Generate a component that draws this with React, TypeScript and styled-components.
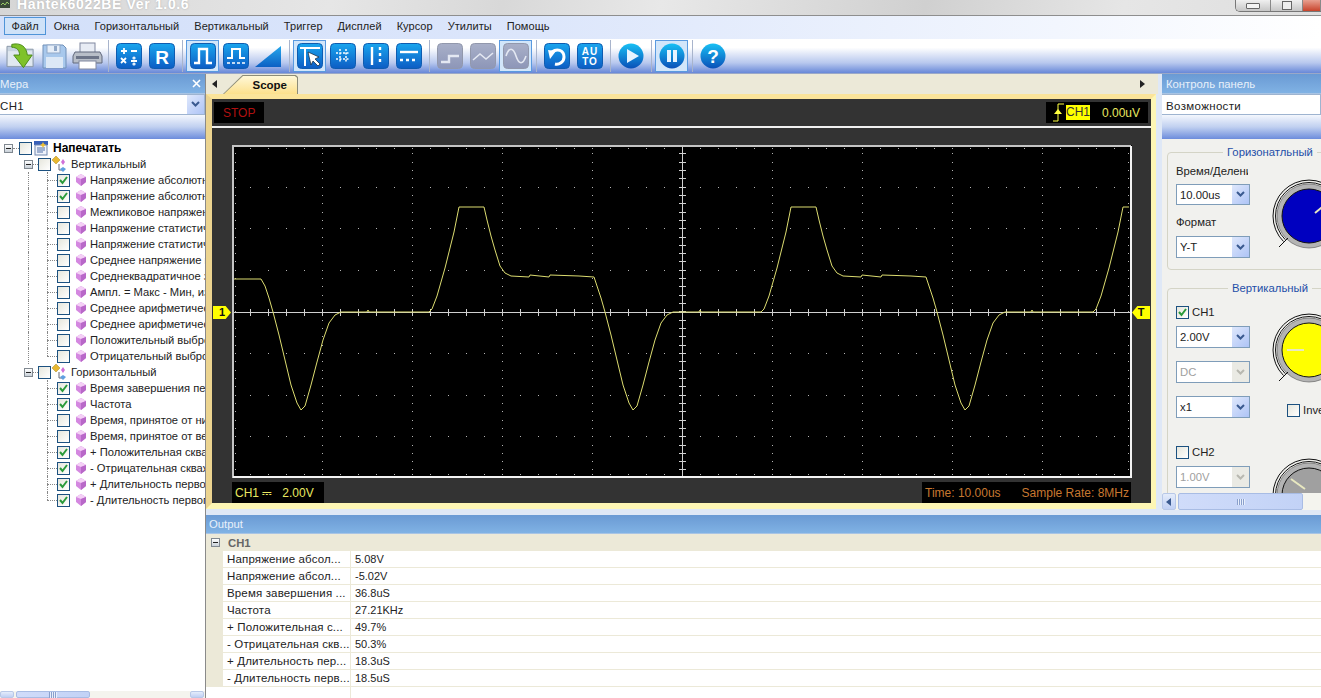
import React from 'react';
import styled, { createGlobalStyle } from 'styled-components';

const GlobalStyle = createGlobalStyle`
  html, body { margin: 0; padding: 0; overflow: hidden; background: #fff; }
  * { box-sizing: border-box; }
`;

const FONT = `"Liberation Sans", Arial, sans-serif`;

const Root = styled.div`
  width: 1321px;
  height: 698px;
  display: flex;
  flex-direction: column;
  overflow: hidden;
  font-family: ${FONT};
  font-size: 11.3px;
  color: #222;
  background: #dfe8f6;
`;

/* title bar */
const TitleBar = styled.div`
  height: 16px;
  flex: none;
  display: flex;
  justify-content: space-between;
  overflow: hidden;
  border-bottom: 1px solid #8e8e8e;
  background: linear-gradient(100deg, #d6d6d6 0%, #e6e6e6 25%, #d8d8d8 38%, #e8e8e8 50%, #d0d0d0 70%, #e6e6e6 85%, #dedede 100%);
`;
const TitleLeft = styled.div`
  display: flex;
  align-items: flex-start;
  gap: 7px;
`;
const TitleText = styled.div`
  font-size: 14px;
  font-weight: bold;
  letter-spacing: 0.65px;
  line-height: 14px;
  margin-top: -3px;
  color: #fff;
  text-shadow: 0 0 2px #aaa;
`;
const WinButtons = styled.div`
  display: flex;
  height: 12px;
  border: 1px solid #777;
  border-top: none;
  border-right: none;
  border-radius: 0 0 0 5px;
  overflow: hidden;
`;
const WinButton = styled.div<{ $w: number; $close?: boolean }>`
  width: ${(p) => p.$w}px;
  display: flex;
  align-items: center;
  justify-content: center;
  border-right: 1px solid #888;
  background: ${(p) => (p.$close ? 'linear-gradient(#e8a090, #c8442c)' : 'linear-gradient(#f0f0f0, #c6c6c6)')};
`;
const MinGlyph = styled.div`
  width: 14px;
  height: 6px;
  border: 1px solid #666;
  border-radius: 1px;
  background: #f4f4f4;
`;
const RestoreGlyph = styled.div`
  width: 10px;
  height: 9px;
  border: 1px solid #666;
  background: #eee;
`;

/* menu */
const MenuBar = styled.div`
  height: 23px;
  flex: none;
  display: flex;
  align-items: flex-start;
  padding: 1px 0 0 4px;
  background: linear-gradient(90deg, #d3e0fa 0%, #dce6fb 40%, #f2f6fe 80%, #ffffff 100%);
`;
const MenuItem = styled.div<{ $active?: boolean }>`
  height: 18px;
  line-height: 17px;
  padding: 0 6.5px;
  font-size: 11px;
  letter-spacing: 0.05px;
  white-space: nowrap;
  border: 1px solid ${(p) => (p.$active ? '#4f94d8' : 'transparent')};
  background: ${(p) => (p.$active ? '#cfe2f8' : 'transparent')};
  color: #222;
`;

/* toolbar */
const Toolbar = styled.div`
  height: 35px;
  flex: none;
  display: flex;
  align-items: center;
  padding-left: 5px;
  background: linear-gradient(#fff 0%, #fff 25%, #b8c8ee 70%, #6888d8 100%);
  border-bottom: 1px solid #9aa8c8;
`;
const ToolButton = styled.div<{ $active?: boolean }>`
  width: 33px;
  height: 32px;
  flex: none;
  display: flex;
  align-items: center;
  justify-content: center;
  border: 1px solid ${(p) => (p.$active ? '#5a9ae0' : 'transparent')};
  background: ${(p) => (p.$active ? '#d2e6fa' : 'transparent')};
`;
const ToolSep = styled.div`
  width: 1px;
  height: 32px;
  flex: none;
  margin: 0 3px 0 4px;
  background: #a8b4cc;
`;

const Tile = ({ gray, children }: { gray?: boolean; children?: React.ReactNode }) => {
  const id = gray ? 'tileGray' : 'tileBlue';
  return (
    <svg width="26" height="26" viewBox="0 0 26 26">
      <defs>
        <linearGradient id={id} x1="0" y1="0" x2="0" y2="1">
          <stop offset="0" stopColor={gray ? '#a9b0c8' : '#1aa6ee'} />
          <stop offset="1" stopColor={gray ? '#8d96b8' : '#0c5cc4'} />
        </linearGradient>
      </defs>
      <rect x="0.5" y="0.5" width="25" height="25" rx="4" fill={`url(#${id})`} stroke={gray ? '#9298ac' : '#0f5cb0'} />
      <g fill="none" stroke="#fff" strokeWidth="2">{children}</g>
    </svg>
  );
};

const Disc = ({ children }: { children?: React.ReactNode }) => (
  <svg width="26" height="26" viewBox="0 0 26 26">
    <defs>
      <linearGradient id="discBlue" x1="0" y1="0" x2="0" y2="1">
        <stop offset="0" stopColor="#18c0f4" />
        <stop offset="1" stopColor="#0a50b8" />
      </linearGradient>
    </defs>
    <circle cx="13" cy="13" r="12.5" fill="url(#discBlue)" />
    {children}
  </svg>
);

const OpenIcon = () => (
  <svg width="32" height="28" viewBox="0 0 32 28">
    <path d="M1 4h10l2 3h15v18H1z" fill="#c8d4e0" stroke="#8a98a8" />
    <path d="M2 9h25v15H2z" fill="#e0e8f0" />
    <path d="M6 2c9-2 15 2 16 11h5l-9 13-10-13h6C14 8 11 5 6 5z" fill="#7fc22a" stroke="#4a8a18" />
  </svg>
);
const SaveIcon = () => (
  <svg width="25" height="26" viewBox="0 0 25 26">
    <path d="M1 2h20l3 3v20H1z" fill="#a8c8ec" stroke="#7090b8" />
    <rect x="5" y="2" width="13" height="8" fill="#e6eef8" stroke="#90a8c8" />
    <rect x="12" y="3" width="3" height="5" fill="#90a8c8" />
    <rect x="4" y="14" width="17" height="11" fill="#dce8f6" />
  </svg>
);
const PrintIcon = () => (
  <svg width="31" height="28" viewBox="0 0 31 28">
    <rect x="8" y="1" width="15" height="10" fill="#e8ecf4" stroke="#8088a0" />
    <path d="M3 10h25l2 4v7H1v-7z" fill="#b8bec8" stroke="#60687c" />
    <rect x="4" y="14" width="23" height="3" fill="#6c7488" />
    <rect x="7" y="19" width="17" height="8" fill="#fff" stroke="#8088a0" />
  </svg>
);
const RampIcon = () => (
  <svg width="27" height="22" viewBox="0 0 27 22">
    <defs>
      <linearGradient id="ramp" x1="0" y1="0" x2="0" y2="1">
        <stop offset="0" stopColor="#26a8ec" />
        <stop offset="1" stopColor="#0c60c4" />
      </linearGradient>
    </defs>
    <polygon points="0,22 26,1 26,22" fill="url(#ramp)" />
  </svg>
);

/* main layout */
const Main = styled.div`
  flex: 1;
  min-height: 0;
  display: flex;
`;
const LeftPanel = styled.div`
  width: 206px;
  flex: none;
  display: flex;
  flex-direction: column;
  border-right: 1px solid #8a8a8a;
  background: #fff;
`;
const DockHeader = styled.div<{ $h?: number; $pl?: number }>`
  height: ${(p) => p.$h ?? 20}px;
  flex: none;
  display: flex;
  align-items: center;
  justify-content: space-between;
  padding: 0 4px 0 ${(p) => p.$pl ?? 0}px;
  color: #e8f0fa;
  font-size: 11.3px;
  background: linear-gradient(#6a9ad4, #80b2e4);
  border-bottom: 1px solid #a8c4e4;
`;
const DockCombo = styled.div<{ $pl?: number }>`
  height: 21px;
  flex: none;
  display: flex;
  align-items: center;
  justify-content: space-between;
  padding-left: ${(p) => p.$pl ?? 0}px;
  background: #fff;
  border: 1px solid #9eb4d0;
  border-left: none;
  font-size: 11.5px;
  letter-spacing: 0.35px;
`;
const ComboText = styled.span`
  padding-top: 2px;
`;
const DockBand = styled.div`
  height: 24px;
  flex: none;
  background: linear-gradient(#f4f7fd 0%, #c0d0f0 50%, #6c8cdc 100%);
`;
const Tree = styled.div`
  flex: 1;
  min-height: 0;
  padding-top: 1px;
  overflow: hidden;
  background: #fff;
`;
const TreeRow = styled.div<{ $level: number }>`
  height: 16px;
  display: flex;
  align-items: center;
  white-space: nowrap;
  padding-left: ${(p) => [4, 24, 28][p.$level]}px;
  font-size: 11.2px;
  color: #222;
`;
const Expander = styled.span`
  width: 9px;
  height: 9px;
  flex: none;
  display: flex;
  align-items: center;
  justify-content: center;
  border: 1px solid #808890;
  background: linear-gradient(#fff, #c8d0d8);
  &::before {
    content: '';
    width: 5px;
    height: 1px;
    background: #222;
  }
`;
const Stub = styled.span<{ $w: number }>`
  width: ${(p) => p.$w}px;
  flex: none;
  border-top: 1px dotted #888;
`;
const Pipe = styled.span<{ $show: boolean }>`
  width: 19px;
  height: 16px;
  flex: none;
  border-left: 1px dotted ${(p) => (p.$show ? '#888' : 'transparent')};
`;
const Elbow = styled.span<{ $last?: boolean }>`
  width: 10px;
  height: 16px;
  flex: none;
  position: relative;
  &::before {
    content: '';
    position: absolute;
    left: 0;
    top: 0;
    height: ${(p) => (p.$last ? '8px' : '16px')};
    border-left: 1px dotted #888;
  }
  &::after {
    content: '';
    position: absolute;
    left: 0;
    top: 8px;
    width: 10px;
    border-top: 1px dotted #888;
  }
`;
const CheckBox = styled.span`
  width: 13px;
  height: 13px;
  flex: none;
  display: inline-flex;
  align-items: center;
  justify-content: center;
  border: 1px solid #1c5180;
  background: linear-gradient(135deg, #e6e6dc, #ffffff);
`;
const Check = ({ on }: { on?: boolean }) => (
  <CheckBox>
    {on && (
      <svg width="11" height="11" viewBox="0 0 11 11">
        <path d="M2 5l2.5 3L9 2" fill="none" stroke="#2a9a3a" strokeWidth="2" />
      </svg>
    )}
  </CheckBox>
);
const TreeLabel = styled.span<{ $bold?: boolean; $gap: number }>`
  margin-left: ${(p) => p.$gap}px;
  font-weight: ${(p) => (p.$bold ? 'bold' : 'normal')};
  font-size: ${(p) => (p.$bold ? '12px' : 'inherit')};
  color: ${(p) => (p.$bold ? '#000' : '#222')};
`;
const GemWrap = styled.svg`
  margin-left: 6px;
  flex: none;
`;
const Gem = () => (
  <GemWrap width="10" height="12" viewBox="0 0 10 12">
    <polygon points="5,0 10,3 10,8 5,12 0,8 0,3" fill="#d488e0" />
    <polygon points="5,0 10,3 5,5 0,3" fill="#f4d0f6" />
    <polygon points="5,5 10,3 10,8 5,12" fill="#b868c8" />
  </GemWrap>
);
const RootIcon = () => (
  <svg width="15" height="15" viewBox="0 0 15 15" style={{ marginLeft: 2, flex: 'none' }}>
    <rect x="0" y="0" width="14" height="4" fill="#3860b8" />
    <rect x="1" y="4" width="12" height="10" fill="#eef2fa" stroke="#7088b0" />
    <path d="M3 7h8M3 9h8M3 11h6" stroke="#5070a8" />
    <path d="M9 1l1 2 2 1-2 1-1 2-1-2-2-1 2-1z" fill="#f0c030" />
  </svg>
);
const GroupIcon = () => (
  <svg width="15" height="16" viewBox="0 0 15 16" style={{ marginLeft: 1, flex: 'none' }}>
    <polygon points="4,0 8,4 4,8 0,4" fill="#e8b830" stroke="#a88420" strokeWidth="0.5" />
    <polygon points="11,3 13,6 11,9 9,6" fill="#d070d8" />
    <path d="M7 8v6h3" fill="none" stroke="#667" />
    <polygon points="11,11 14,13 11,16 8,13" fill="#60a0e0" />
  </svg>
);
const HScroll = styled.div<{ $h: number }>`
  height: ${(p) => p.$h}px;
  flex: none;
  display: flex;
  align-items: stretch;
  background: #f4f4ee;
  overflow: hidden;
`;
const ScrollBtn = styled.div<{ $ml?: number }>`
  width: 14px;
  flex: none;
  margin-left: ${(p) => p.$ml ?? 0}px;
  display: flex;
  align-items: center;
  justify-content: center;
  border: 1px solid #b8c8e8;
  border-radius: 2px;
  background: linear-gradient(#e4ecfb, #c0d0f4);
`;
const ScrollThumb = styled.div<{ $w: number }>`
  width: ${(p) => p.$w}px;
  flex: none;
  margin-left: 2px;
  display: flex;
  align-items: center;
  justify-content: center;
  border: 1px solid #a8bce4;
  border-radius: 2px;
  background: linear-gradient(90deg, #d0dcfa, #c2d2f6);
`;
const Grip = styled.div`
  width: 8px;
  height: 6px;
  background: repeating-linear-gradient(90deg, #8aa0cc 0 1px, #e8effc 1px 2px);
`;
const LeftCaret = () => (
  <svg width="6" height="8" viewBox="0 0 6 8">
    <path d="M5 0v8L0 4z" fill="#3a5a90" />
  </svg>
);

const RightArea = styled.div`
  flex: 1;
  min-width: 0;
  display: flex;
  flex-direction: column;
`;
const TopArea = styled.div`
  height: 441px;
  flex: none;
  display: flex;
`;
const Center = styled.div`
  width: 952px;
  flex: none;
  display: flex;
  flex-direction: column;
`;
const TabBar = styled.div`
  height: 20px;
  flex: none;
  display: flex;
  align-items: flex-end;
  background: #ece9d8;
  padding-left: 6px;
`;
const TabArrow = styled.span<{ $right?: boolean }>`
  width: 0;
  height: 0;
  flex: none;
  align-self: center;
  border-top: 4px solid transparent;
  border-bottom: 4px solid transparent;
  border-right: ${(p) => (p.$right ? 'none' : '5px solid #222')};
  border-left: ${(p) => (p.$right ? '5px solid #222' : 'none')};
  margin-left: ${(p) => (p.$right ? 'auto' : '0')};
  margin-right: ${(p) => (p.$right ? '13px' : '0')};
`;
const Tab = styled.div`
  width: 75px;
  height: 19px;
  margin-left: 6px;
  position: relative;
  display: flex;
  align-items: center;
  justify-content: flex-end;
  padding-right: 11px;
  font-weight: bold;
  font-size: 11.5px;
  color: #111;
  &::before {
    content: '';
    position: absolute;
    inset: 0;
    background: #8c8c78;
    clip-path: polygon(0 100%, 26% 0, 97% 0, 100% 10%, 100% 100%);
  }
  &::after {
    content: '';
    position: absolute;
    inset: 1px 1px 0 1px;
    background: linear-gradient(#fff8d8, #fce08c);
    clip-path: polygon(0 100%, 26% 0, 97% 0, 100% 10%, 100% 100%);
  }
`;
const TabLabel = styled.span`
  position: relative;
  z-index: 1;
`;
const ScopeFrame = styled.div`
  width: 950px;
  flex: 1;
  min-height: 0;
  margin-bottom: 6px;
  border-style: solid;
  border-width: 5px 5px 6px 6px;
  border-color: #fbe49a #fdf6b4 #fdf6b4 #ecd490;
`;
const ScopePanel = styled.div`
  position: relative;
  height: 100%;
  display: flex;
  flex-direction: column;
  background: #333;
`;
const ScopeTop = styled.div`
  height: 29px;
  flex: none;
  display: flex;
  align-items: center;
  justify-content: space-between;
  padding: 0 3px 0 2px;
  border-bottom: 2px solid #f0f0f0;
`;
const ReadOut = styled.div<{ $w: number; $color: string }>`
  width: ${(p) => p.$w}px;
  height: 21px;
  flex: none;
  display: flex;
  align-items: center;
  background: #000;
  color: ${(p) => p.$color};
  font-size: 12px;
  white-space: nowrap;
`;
const StopText = styled.span`
  margin-left: 9px;
`;
const HiCh = styled.span`
  background: #ffff00;
  color: #333;
  line-height: 15px;
`;
const TrigValue = styled.span`
  margin-left: 12px;
`;
const PlotWrap = styled.div`
  padding: 17px 0 0 20px;
  flex: none;
`;
const Plot = styled.svg`
  display: block;
`;
const ScopeBottom = styled.div`
  display: flex;
  justify-content: space-between;
  padding: 4px 20px 0 20px;
`;
const BottomText = styled.span`
  margin-left: 3px;
`;
const RateText = styled.span`
  margin-left: 21px;
`;
const Marker = styled.div<{ $side: 'left' | 'right' }>`
  position: absolute;
  top: 207px;
  ${(p) => (p.$side === 'left' ? 'left: 1px;' : 'right: 1px;')}
  width: 18px;
  height: 13px;
  display: flex;
  align-items: center;
  justify-content: center;
  background: #ffff00;
  color: #111;
  font-size: 11px;
  font-weight: bold;
  line-height: 13px;
  clip-path: ${(p) =>
    p.$side === 'left'
      ? 'polygon(0 0, 70% 0, 100% 50%, 70% 100%, 0 100%)'
      : 'polygon(30% 0, 100% 0, 100% 100%, 30% 100%, 0 50%)'};
`;

/* control panel */
const RightPanel = styled.div`
  width: 159px;
  flex: none;
  margin-left: 4px;
  display: flex;
  flex-direction: column;
  height: 436px;
`;
const Controls = styled.div`
  flex: 1;
  min-height: 0;
  overflow: hidden;
  padding: 6px 0 0 5px;
  background: #f1f1ee;
`;
const Group = styled.fieldset<{ $mt?: number; $pb?: number }>`
  width: 240px;
  margin: ${(p) => p.$mt ?? 0}px 0 0 0;
  padding: 5px 0 ${(p) => p.$pb ?? 0}px 8px;
  min-width: 0;
  border: 1px solid #d4d4c6;
  border-radius: 4px;
  display: block;
`;
const GroupTitle = styled.legend<{ $ml: number }>`
  margin-left: ${(p) => p.$ml}px;
  padding: 0 4px;
  line-height: 14px;
  font-size: 11.3px;
  color: #1f4fa8;
`;
const GroupBody = styled.div`
  display: flex;
`;
const ControlCol = styled.div`
  width: 74px;
  flex: none;
`;
const KnobCol = styled.div`
  margin-left: 21px;
  flex: none;
`;
const FieldLabel = styled.div<{ $mt?: number }>`
  width: 72px;
  height: 14px;
  line-height: 14px;
  margin-top: ${(p) => p.$mt ?? 0}px;
  overflow: hidden;
  white-space: nowrap;
  color: #222;
`;
const Select = styled.div<{ $mt: number; $off?: boolean; $h?: number }>`
  width: 74px;
  height: ${(p) => p.$h ?? 22}px;
  margin-top: ${(p) => p.$mt}px;
  display: flex;
  align-items: center;
  justify-content: space-between;
  padding-left: 3px;
  border: 1px solid #7f9db9;
  background: #fff;
  color: ${(p) => (p.$off ? '#a0a0a0' : '#222')};
`;
const SelectArrow = styled.span<{ $off?: boolean }>`
  width: 17px;
  align-self: stretch;
  flex: none;
  display: flex;
  align-items: center;
  justify-content: center;
  background: ${(p) => (p.$off ? '#eaeae4' : 'linear-gradient(135deg, #dfe8fc, #aec4f6)')};
`;
const Chevron = ({ off }: { off?: boolean }) => (
  <svg width="9" height="7" viewBox="0 0 9 7">
    <path d="M1 1l3.5 3.5L8 1" fill="none" stroke={off ? '#b8b8b0' : '#3a5a90'} strokeWidth="2" />
  </svg>
);
const CheckRow = styled.div<{ $mt?: number; $ml?: number }>`
  height: 14px;
  display: flex;
  align-items: center;
  gap: 3px;
  margin-top: ${(p) => p.$mt ?? 0}px;
  margin-left: ${(p) => p.$ml ?? 0}px;
  white-space: nowrap;
`;
const KnobBox = styled.div<{ $mt: number }>`
  margin-top: ${(p) => p.$mt}px;
  width: 76px;
  height: 76px;
`;
const Knob = ({ color, pointer, mt }: { color: string; pointer: [number, number, number, number]; mt: number }) => (
  <KnobBox $mt={mt}>
    <svg width="76" height="76" viewBox="0 0 76 76">
      <circle cx="38" cy="38" r="32" fill="#b4b4b4" stroke="#555" strokeWidth="0.6" />
      <path d="M12.5 63.5A36 36 0 1 1 63.5 63.5" fill="none" stroke="#111" />
      <path d="M14.3 61.7A33.5 33.5 0 1 1 61.7 61.7" fill="none" stroke="#111" />
      <circle cx="38" cy="38" r="27" fill={color} stroke="#111" />
      <line x1={pointer[0]} y1={pointer[1]} x2={pointer[2]} y2={pointer[3]} stroke="#e8e8c0" strokeWidth="2" />
      <line x1="8" y1="69" x2="17" y2="60" stroke="#111" />
    </svg>
  </KnobBox>
);

/* output */
const Output = styled.div`
  flex: 1;
  min-height: 0;
  display: flex;
  flex-direction: column;
  background: #fff;
`;
const GroupRow = styled.div`
  height: 17px;
  flex: none;
  display: flex;
  align-items: center;
  padding-left: 5px;
  background: #ece9d8;
  color: #666;
  font-weight: bold;
  font-size: 11.3px;
`;
const GroupName = styled.span`
  margin-left: 8px;
`;
const DataRow = styled.div`
  height: 17px;
  flex: none;
  display: flex;
  padding-left: 17px;
  background: #ece9d8;
`;
const NameCell = styled.div`
  width: 128px;
  flex: none;
  padding-left: 4px;
  line-height: 16px;
  font-size: 11.5px;
  letter-spacing: 0.15px;
  white-space: nowrap;
  overflow: hidden;
  background: #fff;
  border-right: 1px solid #ece9d8;
  border-bottom: 1px solid #ece9d8;
`;
const ValueCell = styled.div`
  flex: 1;
  padding-left: 4px;
  line-height: 16px;
  font-size: 11px;
  background: #fff;
  border-bottom: 1px solid #ece9d8;
`;
const Filler = styled.div`
  flex: 1;
  width: 145px;
  border-right: 1px solid #ece9d8;
`;

/* data */
const vertItems: [string, boolean][] = [
  ['Напряжение абсолютного', true],
  ['Напряжение абсолютного', true],
  ['Межпиковое напряжение', false],
  ['Напряжение статистическое', false],
  ['Напряжение статистическое', false],
  ['Среднее напряжение на', false],
  ['Среднеквадратичное значение', false],
  ['Ампл. = Макс - Мин, измерение', false],
  ['Среднее арифметическое', false],
  ['Среднее арифметическое', false],
  ['Положительный выброс', false],
  ['Отрицательный выброс', false],
];
const horzItems: [string, boolean][] = [
  ['Время завершения периода', true],
  ['Частота', true],
  ['Время, принятое от низкого', false],
  ['Время, принятое от верхнего', false],
  ['+ Положительная скважность', true],
  ['- Отрицательная скважность', true],
  ['+ Длительность первого', true],
  ['- Длительность первого', true],
];
const outputRows = [
  ['Напряжение абсол...', '5.08V'],
  ['Напряжение абсол...', '-5.02V'],
  ['Время завершения ...', '36.8uS'],
  ['Частота', '27.21KHz'],
  ['+ Положительная с...', '49.7%'],
  ['- Отрицательная скв...', '50.3%'],
  ['+ Длительность пер...', '18.3uS'],
  ['- Длительность перв...', '18.5uS'],
];
const menuItems = ['Файл', 'Окна', 'Горизонтальный', 'Вертикальный', 'Триггер', 'Дисплей', 'Курсор', 'Утилиты', 'Помощь'];

/* plot geometry, coordinates relative to the plot's own corner */
const PW = 900;
const PH = 333;
const CX = 450;
const CY = 167;
const DY = 41.6;
const STEP_X = 18;
const STEP_Y = DY / 5;

const range = (n: number) => Array.from({ length: n }, (_, i) => i);

const dots = (() => {
  let d = '';
  range(7).forEach((i) => {
    const y = Math.round(DY * (i + 1));
    range(50).forEach((k) => {
      d += `M${k * STEP_X} ${y}h1`;
    });
  });
  range(9).forEach((i) => {
    const x = 90 * (i + 1);
    range(40).forEach((k) => {
      d += `M${x} ${Math.round(k * STEP_Y)}h1`;
    });
  });
  range(40).forEach((k) => {
    const y = Math.round(k * STEP_Y);
    d += `M3 ${y}h1M${PW - 4} ${y}h1`;
  });
  range(50).forEach((k) => {
    d += `M${k * STEP_X} 3h1M${k * STEP_X} ${PH - 4}h1`;
  });
  return d;
})();

const ticks = (() => {
  let d = `M2 ${CY}H${PW - 2}M${CX} 2V${PH - 2}`;
  range(50).forEach((k) => {
    d += `M${k * STEP_X} ${CY - 3}v7`;
  });
  range(40).forEach((k) => {
    d += `M${CX - 3} ${Math.round(k * STEP_Y)}h7`;
  });
  return d;
})();

/* one period of the signal, dx from the rising edge and y in page pixels */
const period: [number, number][] = [
  [0, 312], [3, 309], [8, 296], [12, 282], [16, 268], [20, 252], [25, 232], [30, 207], [55, 207], [58, 220],
  [62, 236], [66, 250], [71, 266], [76, 273], [82, 276], [100, 277], [101, 275], [120, 277], [121, 275], [150, 276],
  [165, 277], [168, 286], [172, 298], [176, 312], [182, 335], [188, 360], [194, 385], [200, 403], [204, 410], [208, 406],
  [214, 385], [220, 362], [226, 340], [232, 323], [238, 315], [244, 312], [270, 312], [271, 310], [272, 312], [300, 312],
];

const wave = (() => {
  const pts: string[] = [];
  range(4).forEach((n) => {
    const x0 = 430 - 332 + n * 332 - 233;
    period.forEach(([dx, y]) => {
      const x = x0 + dx;
      if (n === 0 && dx <= 165) return;
      if (x <= 897) pts.push(`${x},${y - 145}`);
    });
  });
  return `2,134 29,134 ${pts.join(' ')} 897,62`;
})();

const TriggerGlyph = () => (
  <svg width="12" height="19" viewBox="0 0 12 19" style={{ margin: '0 2px 0 6px', flex: 'none' }}>
    <path d="M1 18h5V1h6" fill="none" stroke="#ffff40" />
    <path d="M2 11h8L6 6z" fill="#ffff40" />
  </svg>
);

export default function App() {
  return (
    <Root>
      <GlobalStyle />
      <TitleBar>
        <TitleLeft>
          <svg width="10" height="8" viewBox="0 0 10 8" style={{ flex: 'none' }}>
            <rect width="10" height="8" fill="#3a4a3a" />
            <path d="M1 5l2-2 2 2 2-3 2 2" fill="none" stroke="#9c6" />
          </svg>
          <TitleText>Hantek6022BE Ver 1.0.6</TitleText>
        </TitleLeft>
        <WinButtons>
          <WinButton $w={35}><MinGlyph /></WinButton>
          <WinButton $w={32}><RestoreGlyph /></WinButton>
          <WinButton $w={18} $close />
        </WinButtons>
      </TitleBar>

      <MenuBar>
        {menuItems.map((m, i) => (
          <MenuItem key={m} $active={i === 0}>{m}</MenuItem>
        ))}
      </MenuBar>

      <Toolbar>
        <ToolButton><OpenIcon /></ToolButton>
        <ToolButton><SaveIcon /></ToolButton>
        <ToolButton><PrintIcon /></ToolButton>
        <ToolSep />
        <ToolButton>
          <Tile>
            <path d="M5 8h6M8 5v6M15 8h6M5 15l5 5M10 15l-5 5M15 18h6" strokeWidth="1.8" />
            <circle cx="18" cy="15" r="0.6" />
            <circle cx="18" cy="21" r="0.6" />
          </Tile>
        </ToolButton>
        <ToolButton>
          <Tile>
            <text x="13" y="20.5" textAnchor="middle" fontSize="19" fontWeight="bold" fontFamily={FONT} fill="#fff" stroke="none">R</text>
          </Tile>
        </ToolButton>
        <ToolSep />
        <ToolButton $active><Tile><path d="M4 20h5V6h8v14h5" strokeWidth="2.4" /></Tile></ToolButton>
        <ToolButton>
          <Tile>
            <path d="M4 15h5V6h8v9h5" strokeWidth="2" />
            <path d="M4 20h18" strokeDasharray="3 2" strokeWidth="1.6" />
          </Tile>
        </ToolButton>
        <ToolButton><RampIcon /></ToolButton>
        <ToolSep />
        <ToolButton $active>
          <Tile>
            <path d="M3 5h20M8 5v18" strokeWidth="2" />
            <path d="M11 9l11 5-4 2 5 5-2 2-5-5-2 4z" fill="#fff" stroke="#123" strokeWidth="0.7" />
          </Tile>
        </ToolButton>
        <ToolButton>
          <Tile>
            <path d="M10 6v14M16 6v14M6 10h14M6 16h14" strokeDasharray="2 1.5" strokeWidth="1.5" />
          </Tile>
        </ToolButton>
        <ToolButton>
          <Tile>
            <path d="M9 4v18" strokeWidth="2.4" />
            <path d="M17 4v18" strokeWidth="2.4" strokeDasharray="3 3" />
          </Tile>
        </ToolButton>
        <ToolButton>
          <Tile>
            <path d="M4 9h18" strokeWidth="2.4" />
            <path d="M4 17h18" strokeWidth="2.4" strokeDasharray="3 3" />
          </Tile>
        </ToolButton>
        <ToolSep />
        <ToolButton><Tile gray><path d="M4 19h8v-6h10" strokeWidth="2.4" stroke="#e4e8f2" /></Tile></ToolButton>
        <ToolButton><Tile gray><path d="M3 17l7-6 6 5 7-6" strokeWidth="1.6" stroke="#e4e8f2" /></Tile></ToolButton>
        <ToolButton $active><Tile gray><path d="M3 13c3-9 7-9 10 0s7 9 10 0" strokeWidth="1.6" stroke="#e4e8f2" /></Tile></ToolButton>
        <ToolSep />
        <ToolButton>
          <Tile>
            <path d="M8 9c5-4 12-2 12 5 0 5-5 8-9 7" strokeWidth="3" />
            <path d="M4 7l8 1-6 8z" fill="#fff" stroke="none" />
          </Tile>
        </ToolButton>
        <ToolButton>
          <Tile>
            <text x="13" y="11.5" textAnchor="middle" fontSize="10" fontWeight="bold" fontFamily={FONT} fill="#fff" stroke="none" letterSpacing="1">AU</text>
            <text x="13" y="22" textAnchor="middle" fontSize="10" fontWeight="bold" fontFamily={FONT} fill="#fff" stroke="none" letterSpacing="1">TO</text>
          </Tile>
        </ToolButton>
        <ToolSep />
        <ToolButton><Disc><path d="M9 6l12 7-12 7z" fill="#e8f4ff" /></Disc></ToolButton>
        <ToolSep />
        <ToolButton $active><Disc><path d="M8 7h4v12H8zM14 7h4v12h-4z" fill="#e8f4ff" /></Disc></ToolButton>
        <ToolSep />
        <ToolButton>
          <Disc>
            <text x="13" y="20" textAnchor="middle" fontSize="19" fontWeight="bold" fontFamily={FONT} fill="#fff">?</text>
          </Disc>
        </ToolButton>
      </Toolbar>

      <Main>
        <LeftPanel>
          <DockHeader>
            <span>Мера</span>
            <svg width="9" height="9" viewBox="0 0 9 9">
              <path d="M1 1l7 7M8 1L1 8" stroke="#fff" strokeWidth="1.6" />
            </svg>
          </DockHeader>
          <DockCombo>
            <ComboText>CH1</ComboText>
            <SelectArrow><Chevron /></SelectArrow>
          </DockCombo>
          <DockBand />
          <Tree>
            <TreeRow $level={0}>
              <Expander /><Stub $w={6} /><Check /><RootIcon />
              <TreeLabel $bold $gap={4}>Напечатать</TreeLabel>
            </TreeRow>
            <TreeRow $level={1}>
              <Expander /><Stub $w={5} /><Check /><GroupIcon />
              <TreeLabel $gap={4}>Вертикальный</TreeLabel>
            </TreeRow>
            {vertItems.map(([text, on], i) => (
              <TreeRow key={`v${i}`} $level={2}>
                <Pipe $show /><Elbow $last={i === vertItems.length - 1} /><Check on={on} /><Gem />
                <TreeLabel $gap={4}>{text}</TreeLabel>
              </TreeRow>
            ))}
            <TreeRow $level={1}>
              <Expander /><Stub $w={5} /><Check /><GroupIcon />
              <TreeLabel $gap={4}>Горизонтальный</TreeLabel>
            </TreeRow>
            {horzItems.map(([text, on], i) => (
              <TreeRow key={`h${i}`} $level={2}>
                <Pipe $show={false} /><Elbow $last={i === horzItems.length - 1} /><Check on={on} /><Gem />
                <TreeLabel $gap={4}>{text}</TreeLabel>
              </TreeRow>
            ))}
          </Tree>
          <HScroll $h={7}>
            <ScrollBtn />
            <ScrollThumb $w={74}><Grip /></ScrollThumb>
            <ScrollBtn $ml={100} />
          </HScroll>
        </LeftPanel>

        <RightArea>
          <TopArea>
            <Center>
              <TabBar>
                <TabArrow />
                <Tab><TabLabel>Scope</TabLabel></Tab>
                <TabArrow $right />
              </TabBar>
              <ScopeFrame>
                <ScopePanel>
                  <ScopeTop>
                    <ReadOut $w={50} $color="#b01010"><StopText>STOP</StopText></ReadOut>
                    <ReadOut $w={102} $color="#e8e860">
                      <TriggerGlyph />
                      <HiCh>CH1</HiCh>
                      <TrigValue>0.00uV</TrigValue>
                    </ReadOut>
                  </ScopeTop>
                  <PlotWrap>
                    <Plot width={PW} height={PH} viewBox={`0 0 ${PW} ${PH}`}>
                      <rect width={PW} height={PH} fill="#000" />
                      <path d={dots} stroke="#b4b4b4" strokeWidth="1" shapeRendering="crispEdges" transform="translate(0 0.5)" />
                      <path d={ticks} stroke="#d0d0d0" strokeWidth="1" fill="none" shapeRendering="crispEdges" />
                      <polyline points={wave} fill="none" stroke="#dcdc70" strokeWidth="1" />
                      <path d={`M1 ${PH}V1H${PW - 1}`} fill="none" stroke="#c4c4c4" strokeWidth="2" />
                      <path d={`M${PW - 1} 1V${PH - 1}H1`} fill="none" stroke="#f4f4f4" strokeWidth="2" />
                    </Plot>
                  </PlotWrap>
                  <ScopeBottom>
                    <ReadOut $w={92} $color="#e8e860">
                      <BottomText>CH1 ⎓&nbsp;&nbsp;&nbsp;2.00V</BottomText>
                    </ReadOut>
                    <ReadOut $w={209} $color="#c87830">
                      <BottomText>Time: 10.00us</BottomText>
                      <RateText>Sample Rate: 8MHz</RateText>
                    </ReadOut>
                  </ScopeBottom>
                  <Marker $side="left">1</Marker>
                  <Marker $side="right">T</Marker>
                </ScopePanel>
              </ScopeFrame>
            </Center>

            <RightPanel>
              <DockHeader $pl={4}>
                <span>Контроль панель</span>
              </DockHeader>
              <DockCombo $pl={4}>
                <ComboText>Возможности</ComboText>
              </DockCombo>
              <DockBand />
              <Controls>
                <Group $pb={11}>
                  <GroupTitle $ml={47}>Горизонатльный</GroupTitle>
                  <GroupBody>
                    <ControlCol>
                      <FieldLabel>Время/Деление</FieldLabel>
                      <Select $mt={6} $h={21}>10.00us<SelectArrow><Chevron /></SelectArrow></Select>
                      <FieldLabel $mt={10}>Формат</FieldLabel>
                      <Select $mt={7}>Y-T<SelectArrow><Chevron /></SelectArrow></Select>
                    </ControlCol>
                    <KnobCol>
                      <Knob mt={14} color="#0000c0" pointer={[44, 35, 56, 25]} />
                    </KnobCol>
                  </GroupBody>
                </Group>
                <Group $mt={11}>
                  <GroupTitle $ml={52}>Вертикальный</GroupTitle>
                  <GroupBody>
                    <ControlCol>
                      <CheckRow $mt={5}><Check on />CH1</CheckRow>
                      <Select $mt={7}>2.00V<SelectArrow><Chevron /></SelectArrow></Select>
                      <Select $mt={13} $off>DC<SelectArrow $off><Chevron off /></SelectArrow></Select>
                      <Select $mt={13}>x1<SelectArrow><Chevron /></SelectArrow></Select>
                      <CheckRow $mt={27}><Check />CH2</CheckRow>
                      <Select $mt={7} $off>1.00V<SelectArrow $off><Chevron off /></SelectArrow></Select>
                    </ControlCol>
                    <KnobCol>
                      <Knob mt={12} color="#ffff00" pointer={[16, 38, 33, 38]} />
                      <CheckRow $mt={15} $ml={16}><Check />Invert</CheckRow>
                      <Knob mt={40} color="#a0a0a0" pointer={[20, 22, 34, 32]} />
                    </KnobCol>
                  </GroupBody>
                </Group>
              </Controls>
              <HScroll $h={17}>
                <ScrollBtn><LeftCaret /></ScrollBtn>
                <ScrollThumb $w={125}><Grip /></ScrollThumb>
              </HScroll>
            </RightPanel>
          </TopArea>

          <Output>
            <DockHeader $h={19} $pl={3}>
              <span>Output</span>
            </DockHeader>
            <GroupRow>
              <Expander />
              <GroupName>CH1</GroupName>
            </GroupRow>
            {outputRows.map(([name, value], i) => (
              <DataRow key={i}>
                <NameCell>{name}</NameCell>
                <ValueCell>{value}</ValueCell>
              </DataRow>
            ))}
            <Filler />
          </Output>
        </RightArea>
      </Main>
    </Root>
  );
}
